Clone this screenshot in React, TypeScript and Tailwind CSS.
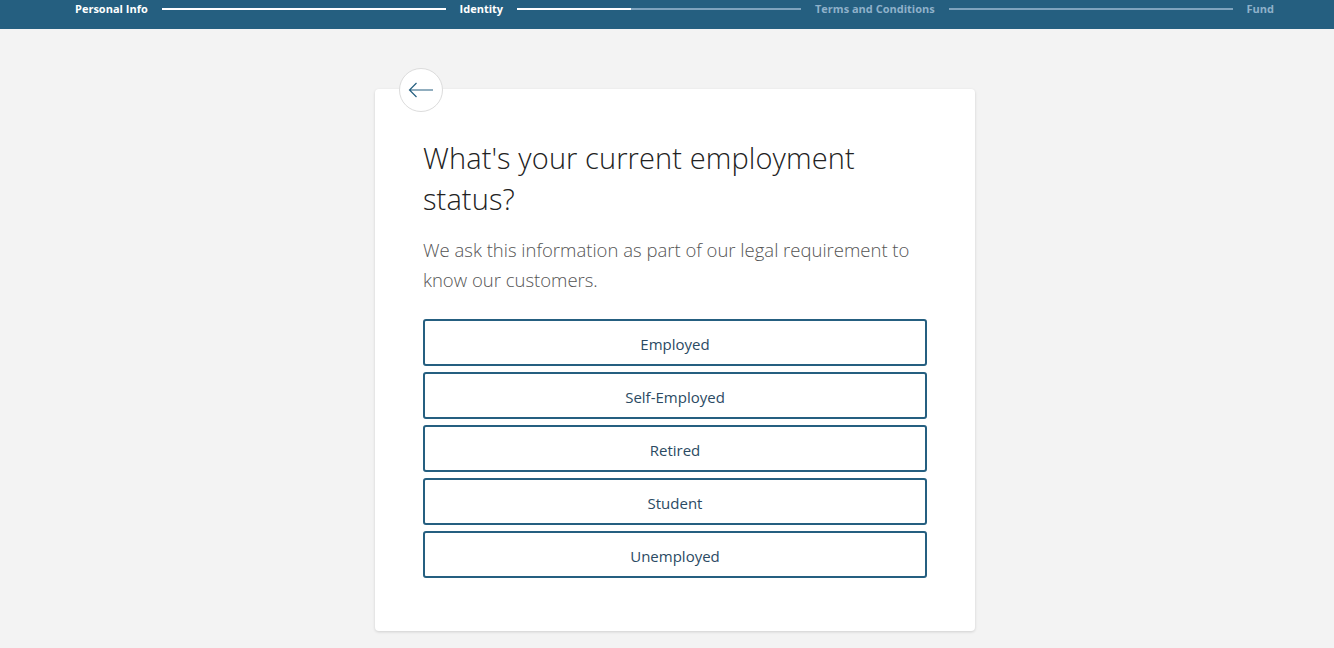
const steps = [
  { label: 'Personal Info', active: true },
  { label: 'Identity', active: true },
  { label: 'Terms and Conditions', active: false },
  { label: 'Fund', active: false },
];

const options = ['Employed', 'Self-Employed', 'Retired', 'Student', 'Unemployed'];

const ProgressBar = () => (
  <div className="h-[29px] bg-[#255f80] flex items-start pl-[75px] pr-[60px] pt-[2px]">
    <div className="flex items-center w-full h-[14px]">
      <span className="text-[11px] font-bold text-white whitespace-nowrap">{steps[0].label}</span>
      <div className="flex-1 mx-[14px] h-[2px] bg-white" />
      <span className="text-[11px] font-bold text-white whitespace-nowrap">{steps[1].label}</span>
      <div className="flex-1 mx-[14px] h-[2px] bg-[#7fa3bd] flex">
        <div className="h-full w-[40%] bg-white" />
      </div>
      <span className="text-[11px] font-bold text-[#8fb1ca] whitespace-nowrap">{steps[2].label}</span>
      <div className="flex-1 mx-[14px] h-[2px] bg-[#7fa3bd]" />
      <span className="text-[11px] font-bold text-[#8fb1ca] whitespace-nowrap">{steps[3].label}</span>
    </div>
  </div>
);

export default function App() {
  return (
    <div className="min-h-[648px] bg-[#f3f3f3] font-['Open_Sans',sans-serif]">
      <ProgressBar />
      <div className="flex justify-center pt-[60px] pl-[16px]">
        <div className="relative w-[600px] bg-white rounded-[4px] shadow-[0_1px_3px_rgba(0,0,0,0.15)] pl-[48px] pr-[48px] pt-[48px] pb-[53px]">
          <button className="absolute left-[24px] -top-[21px] w-[44px] h-[44px] rounded-full bg-white border border-[#dcdcdc] flex items-center justify-center">
            <svg width="26" height="16" viewBox="0 0 26 16" fill="none" stroke="#255f80" strokeWidth="1.2">
              <path d="M25 8H1.5M8.5 1L1.5 8l7 7" />
            </svg>
          </button>
          <h1 className="text-[29px] leading-[41px] font-light text-[#222] tracking-[0.1px]">
            What's your current employment status?
          </h1>
          <p className="mt-[16px] text-[18.5px] leading-[30px] font-light text-[#555]">
            We ask this information as part of our legal requirement to know our customers.
          </p>
          <div className="mt-[24px] flex flex-col gap-[6px]">
            {options.map((o) => (
              <button
                key={o}
                className="h-[47px] w-full border-2 border-[#255f80] rounded-[3px] pt-[3px] text-[15px] text-[#2b4a63] bg-white"
              >
                {o}
              </button>
            ))}
          </div>
        </div>
      </div>
    </div>
  );
}
